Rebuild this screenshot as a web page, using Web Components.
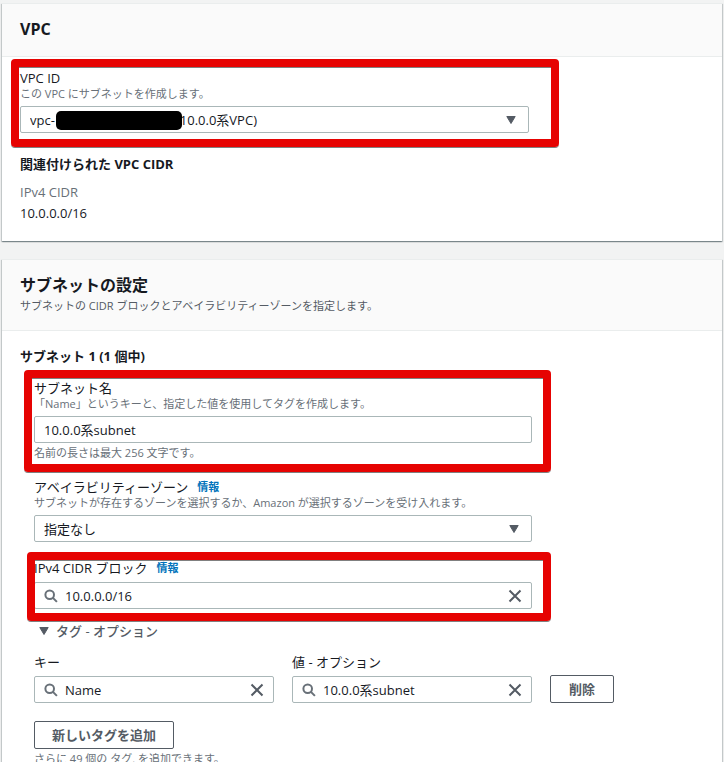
<!DOCTYPE html>
<html lang="ja">
<head>
<meta charset="utf-8">
<meta name="viewport" content="width=device-width, initial-scale=1">
<title>サブネットを作成</title>
<style>
  body { margin: 0; background: #f2f3f3; color: #16191f; font: 13px/16px "Open Sans", "Noto Sans CJK JP", sans-serif; }
</style>
</head>
<body>
<subnet-page></subnet-page>

<script>
(function() {
  const caret = `<svg class="caret" width="10" height="8" viewBox="0 0 10 8" aria-hidden="true"><path d="M.8.5h8.4L5 7.5z" fill="#545b64" stroke="#545b64" stroke-linejoin="round"/></svg>`;
  const glass = `<svg class="glass" width="14" height="14" viewBox="0 0 14 14" aria-hidden="true"><circle cx="5.7" cy="5.7" r="4.3" fill="none" stroke="#687078" stroke-width="2"/><path d="M8.9 8.9l4 4" stroke="#687078" stroke-width="2"/></svg>`;
  const cross = `<svg width="14" height="14" viewBox="0 0 14 14" aria-hidden="true"><path d="M1.5 1.5l11 11M12.5 1.5l-11 11" stroke="#545b64" stroke-width="2"/></svg>`;

  const fieldCss = `
    :host { display: block; min-width: 0; }
    .head { display: flex; align-items: center; gap: 9px; }
    .head a { color: #0073bb; font-size: 11px; font-weight: 600; text-decoration: none; }
    .hint, .note { color: #687078; font-size: 11px; }
    .note { margin-top: 2px; }
    .box { display: grid; align-items: center; margin-top: 6px; }
    .hint + .box { margin-top: 4px; }
    .box > * { grid-area: 1 / 1; }
    input, select { box-sizing: border-box; width: 100%; height: 27px; margin: 0; padding: 0 9px; border: 1px solid #aab7b8; border-radius: 2px; background: #fff; color: inherit; font: inherit; appearance: none; outline-offset: 1px; }
    .caret { justify-self: end; margin-right: 13px; pointer-events: none; }
    .search input { padding: 0 30px; }
    .glass { margin-left: 10px; pointer-events: none; z-index: 1; }
    .box button { justify-self: end; display: flex; margin-right: 10px; padding: 0; border: 0; background: none; cursor: pointer; }
    .masked { position: relative; }
    .mask { position: absolute; left: 36px; top: 5px; width: 126px; height: 19px; border-radius: 5px; background: #000; }
  `;

  class BaseField extends HTMLElement {
    constructor() {
      super();

      this.shadow = this.attachShadow({ mode: 'open' });
    }

    connectedCallback() {
      const label = this.getAttribute('label');
      const hint = this.getAttribute('hint');
      const note = this.getAttribute('note');

      this.shadow.innerHTML = `
        <style>${fieldCss}</style>
        <div class="head">
          <label for="control">${label}</label>
          ${this.hasAttribute('info') ? '<a href="#info">情報</a>' : ''}
        </div>
        ${hint ? `<div class="hint">${hint}</div>` : ''}
        ${this.control()}
        ${note ? `<div class="note">${note}</div>` : ''}
      `;
    }
  }

  class TextField extends BaseField {
    control() {
      return `<div class="box"><input id="control" type="text" value="${this.getAttribute('value')}"></div>`;
    }
  }

  class SelectField extends BaseField {
    control() {
      return `
        <div class="box">
          <select id="control"><option>${this.getAttribute('value')}</option></select>
          ${caret}
        </div>
      `;
    }
  }

  class SearchField extends BaseField {
    control() {
      return `
        <div class="box search">
          <input id="control" type="text" value="${this.getAttribute('value')}">
          ${glass}
          <button type="button" aria-label="クリア">${cross}</button>
        </div>
      `;
    }

    connectedCallback() {
      super.connectedCallback();

      const input = this.shadow.querySelector('input');
      this.shadow.querySelector('button').addEventListener('click', () => {
        input.value = '';
        input.focus();
      });
    }
  }

  // The id between the prefix and the name is blanked out
  class VpcField extends SelectField {
    control() {
      return `
        <div class="box masked">
          <select id="control"><option>vpc-${'&nbsp;'.repeat(37)}10.0.0系VPC)</option></select>
          ${caret}
          <span class="mask"></span>
        </div>
      `;
    }
  }

  // Red outline drawn over whatever is slotted in
  class MarkFrame extends HTMLElement {
    constructor() {
      super();

      this.attachShadow({ mode: 'open' }).innerHTML = `
        <style>
          :host { display: block; position: relative; }
          .frame { position: absolute; inset: var(--frame-inset, -10px); border: 8px solid #e60302; border-radius: 4px; box-shadow: 0 1px 0 #808080, inset 0 1px 0 #808080; pointer-events: none; z-index: 2; }
        </style>
        <slot></slot>
        <div class="frame"></div>
      `;
    }
  }

  class PanelCard extends HTMLElement {
    constructor() {
      super();

      this.attachShadow({ mode: 'open' }).innerHTML = `
        <style>
          :host { display: block; border-top: 1px solid #eaeded; background: #fff; box-shadow: 0 1px 1px 0 rgba(0, 28, 36, .3), 1px 1px 1px 0 rgba(0, 28, 36, .15), -1px 1px 1px 0 rgba(0, 28, 36, .15); }
          header { padding: 14px 18px 16px; border-bottom: 1px solid #eaeded; background: #fafafa; }
          ::slotted(h2) { margin: 0; font-size: 16px; line-height: 22px; font-weight: 700; }
          ::slotted(p) { margin: 2px 0 0; color: #545b64; font-size: 11px; }
          .body { padding: 13px 18px 17px; }
        </style>
        <header><slot name="title"></slot><slot name="description"></slot></header>
        <div class="body"><slot></slot></div>
      `;
    }
  }

  class LineButton extends HTMLElement {
    constructor() {
      super();

      this.attachShadow({ mode: 'open' }).innerHTML = `
        <style>
          :host { display: inline-block; }
          button { box-sizing: border-box; min-width: 64px; height: 28px; padding: 0 17px; border: 1px solid #545b64; border-radius: 2px; background: #fff; color: #545b64; font: inherit; font-weight: 700; white-space: nowrap; cursor: pointer; }
          button:hover { background: #fafafa; }
        </style>
        <button type="button"><slot></slot></button>
      `;
    }
  }

  class TagEditor extends HTMLElement {
    constructor() {
      super();

      this.attachShadow({ mode: 'open' }).innerHTML = `
        <style>
          :host { display: block; }
          summary { display: flex; align-items: center; gap: 7px; padding-left: 5px; color: #545b64; line-height: 20px; list-style: none; cursor: pointer; font-weight: 500; }
          details:not([open]) .caret { transform: rotate(-90deg); }
          .row { display: grid; grid-template-columns: 1fr 1fr auto; align-items: end; gap: 18px; max-width: 580px; margin: 13px 0 18px; }
          .left { margin-top: 2px; color: #687078; font-size: 11px; }
          line-button { vertical-align: top; }
        </style>
        <details open>
          <summary>${caret}タグ - オプション</summary>
          <div class="row">
            <search-field label="キー" value="Name"></search-field>
            <search-field label="値 - オプション" value="10.0.0系subnet"></search-field>
            <line-button>削除</line-button>
          </div>
          <line-button>新しいタグを追加</line-button>
          <div class="left">さらに 49 個の タグ. を追加できます。</div>
        </details>
      `;
    }
  }

  class SubnetPage extends HTMLElement {
    constructor() {
      super();

      this.attachShadow({ mode: 'open' }).innerHTML = `
        <style>
          :host { display: flex; flex-direction: column; gap: 18px; padding: 3px 2px 0; }
          h3 { margin: 0; font-size: 13px; line-height: 24px; font-weight: 700; }
          .vpc { max-width: 509px; margin-bottom: 19px; --frame-inset: -11px -30px -14px -9px; }
          dl { margin: 6px 0 0; line-height: 22px; }
          dt { color: #687078; line-height: 20px; }
          dd { margin: 0; }
          .subnet { display: flex; flex-direction: column; padding: 12px 14px 0; }
          .fields { display: flex; flex-direction: column; gap: 18px; max-width: 498px; margin-bottom: 12px; }
          .name { --frame-inset: -10px -19px -11px -10px; }
          .cidr { --frame-inset: -8px -19px -12px -7px; }
        </style>
        <panel-card>
          <h2 slot="title">VPC</h2>
          <mark-frame class="vpc">
            <vpc-field label="VPC ID" hint="この VPC にサブネットを作成します。"></vpc-field>
          </mark-frame>
          <h3>関連付けられた VPC CIDR</h3>
          <dl>
            <dt>IPv4 CIDR</dt>
            <dd>10.0.0.0/16</dd>
          </dl>
        </panel-card>
        <panel-card>
          <h2 slot="title">サブネットの設定</h2>
          <p slot="description">サブネットの CIDR ブロックとアベイラビリティーゾーンを指定します。</p>
          <h3>サブネット 1 (1 個中)</h3>
          <div class="subnet">
            <div class="fields">
              <mark-frame class="name">
                <text-field label="サブネット名" hint="「Name」というキーと、指定した値を使用してタグを作成します。" note="名前の長さは最大 256 文字です。" value="10.0.0系subnet"></text-field>
              </mark-frame>
              <select-field label="アベイラビリティーゾーン" info hint="サブネットが存在するゾーンを選択するか、Amazon が選択するゾーンを受け入れます。" value="指定なし"></select-field>
              <mark-frame class="cidr">
                <search-field label="IPv4 CIDR ブロック" info value="10.0.0.0/16"></search-field>
              </mark-frame>
            </div>
            <tag-editor></tag-editor>
          </div>
        </panel-card>
      `;
    }
  }

  customElements.define('text-field', TextField);
  customElements.define('select-field', SelectField);
  customElements.define('search-field', SearchField);
  customElements.define('vpc-field', VpcField);
  customElements.define('mark-frame', MarkFrame);
  customElements.define('panel-card', PanelCard);
  customElements.define('line-button', LineButton);
  customElements.define('tag-editor', TagEditor);
  customElements.define('subnet-page', SubnetPage);
})();
</script>
</body>
</html>
